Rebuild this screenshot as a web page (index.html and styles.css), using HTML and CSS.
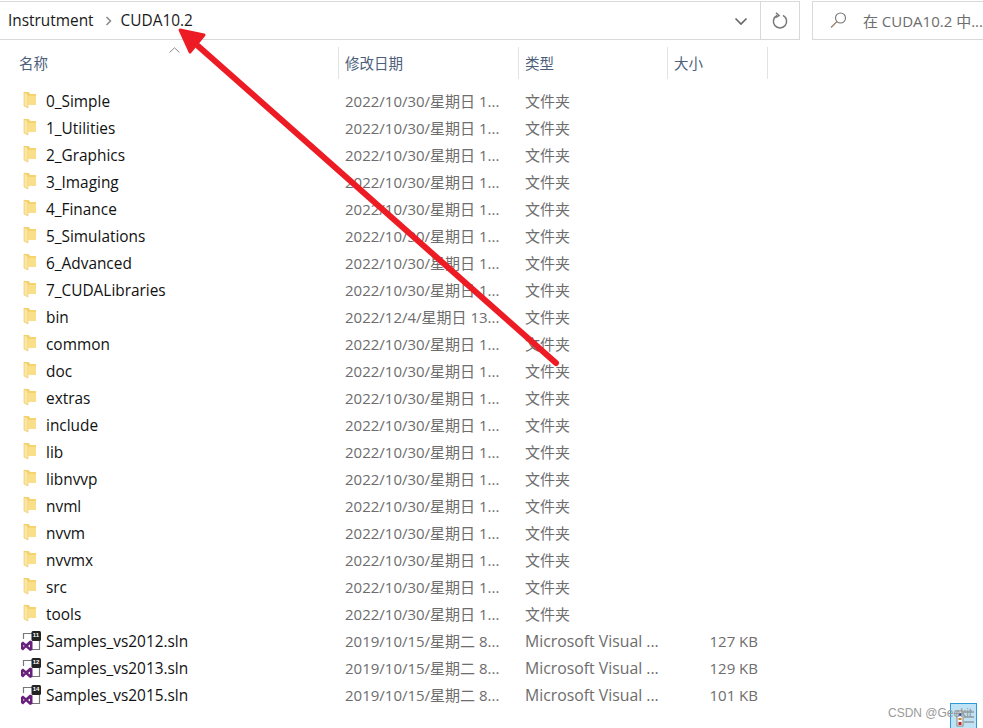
FILE: index.html
```html
<!DOCTYPE HTML>
<html>

<head>
	<meta http-equiv="Content-Type" content="text/html; charset=utf-8">
	<title>CUDA10.2</title>
	<link rel="stylesheet" href="styles.css">
</head>

<body>
	<svg width="0" height="0" class="defs">
		<symbol id="folder" viewBox="0 0 16 18">
			<path d="M3 1 L8 1 L9 3 L15 3 L15 14 L3 14 Z" fill="#f6d36c" />
			<path d="M3 1 L7 3 L7 17 L3 15 Z" fill="#fbe6a2" stroke="#e6c260" stroke-width=".6" />
			<path d="M7 5 L15 5 L15 14 L7 14 Z" fill="#fadf8a" />
		</symbol>
		<symbol id="sln" viewBox="0 0 20 20">
			<path d="M2.5 8 V2.5 H12 M18.5 10 V18.5 H11" fill="none" stroke="#777" stroke-width="1.2" />
			<rect x="10.5" y="0" width="9.5" height="10" rx="1.5" fill="#222" />
			<path d="M0 12 L2 10.5 L5 13 L9 9.5 L11.5 10.5 V19 L9 20 L5 16.5 L2 19.5 L0 18 Z M2.4 13.8 V16 L3.6 15 Z M7 15 L9 16.4 V13.4 Z" fill="#68217a" fill-rule="evenodd" />
		</symbol>
	</svg>

	<div class="toolbar">
		<div class="address">
			<div class="crumbs">
				<span>Instrutment</span>
				<svg class="chev" width="7" height="10" viewBox="0 0 7 10"><path d="M1.5 1 L5.5 5 L1.5 9" fill="none" stroke="#8a8a8a" stroke-width="1.5" /></svg>
				<span>CUDA10.2</span>
			</div>
			<div class="drop">
				<svg width="14" height="9" viewBox="0 0 14 9"><path d="M1.5 1.5 L7 7 L12.5 1.5" fill="none" stroke="#666" stroke-width="1.6" /></svg>
			</div>
			<div class="refresh">
				<svg width="16" height="17" viewBox="0 0 16 17"><path d="M5 3.4 A6.6 6.6 0 1 0 11 3.4" fill="none" stroke="#777" stroke-width="1.5" /><path d="M4 .8 L7 3.6 L3.4 5.6" fill="none" stroke="#777" stroke-width="1.5" /></svg>
			</div>
		</div>
		<div class="search">
			<svg width="17" height="17" viewBox="0 0 17 17"><circle cx="10.5" cy="6" r="5" fill="none" stroke="#777" stroke-width="1.1" /><path d="M7 9.5 L1 15.5" stroke="#9a7f66" stroke-width="1.3" /></svg>
			<span>在 CUDA10.2 中...</span>
		</div>
	</div>

	<div class="head">
		<div class="th th-name">名称<svg class="sort" width="11" height="6" viewBox="0 0 11 6"><path d="M.5 5.5 L5.5 .8 L10.5 5.5" fill="none" stroke="#8a8a8a" /></svg></div>
		<div class="th">修改日期</div>
		<div class="th">类型</div>
		<div class="th">大小</div>
	</div>

	<div class="list">
		<div class="row"><div class="name"><svg class="ico"><use href="#folder" /></svg>0_Simple</div><div class="cell">2022/10/30/星期日 1...</div><div class="cell">文件夹</div><div class="size"></div></div>
		<div class="row"><div class="name"><svg class="ico"><use href="#folder" /></svg>1_Utilities</div><div class="cell">2022/10/30/星期日 1...</div><div class="cell">文件夹</div><div class="size"></div></div>
		<div class="row"><div class="name"><svg class="ico"><use href="#folder" /></svg>2_Graphics</div><div class="cell">2022/10/30/星期日 1...</div><div class="cell">文件夹</div><div class="size"></div></div>
		<div class="row"><div class="name"><svg class="ico"><use href="#folder" /></svg>3_Imaging</div><div class="cell">2022/10/30/星期日 1...</div><div class="cell">文件夹</div><div class="size"></div></div>
		<div class="row"><div class="name"><svg class="ico"><use href="#folder" /></svg>4_Finance</div><div class="cell">2022/10/30/星期日 1...</div><div class="cell">文件夹</div><div class="size"></div></div>
		<div class="row"><div class="name"><svg class="ico"><use href="#folder" /></svg>5_Simulations</div><div class="cell">2022/10/30/星期日 1...</div><div class="cell">文件夹</div><div class="size"></div></div>
		<div class="row"><div class="name"><svg class="ico"><use href="#folder" /></svg>6_Advanced</div><div class="cell">2022/10/30/星期日 1...</div><div class="cell">文件夹</div><div class="size"></div></div>
		<div class="row"><div class="name"><svg class="ico"><use href="#folder" /></svg>7_CUDALibraries</div><div class="cell">2022/10/30/星期日 1...</div><div class="cell">文件夹</div><div class="size"></div></div>
		<div class="row"><div class="name"><svg class="ico"><use href="#folder" /></svg>bin</div><div class="cell">2022/12/4/星期日 13...</div><div class="cell">文件夹</div><div class="size"></div></div>
		<div class="row"><div class="name"><svg class="ico"><use href="#folder" /></svg>common</div><div class="cell">2022/10/30/星期日 1...</div><div class="cell">文件夹</div><div class="size"></div></div>
		<div class="row"><div class="name"><svg class="ico"><use href="#folder" /></svg>doc</div><div class="cell">2022/10/30/星期日 1...</div><div class="cell">文件夹</div><div class="size"></div></div>
		<div class="row"><div class="name"><svg class="ico"><use href="#folder" /></svg>extras</div><div class="cell">2022/10/30/星期日 1...</div><div class="cell">文件夹</div><div class="size"></div></div>
		<div class="row"><div class="name"><svg class="ico"><use href="#folder" /></svg>include</div><div class="cell">2022/10/30/星期日 1...</div><div class="cell">文件夹</div><div class="size"></div></div>
		<div class="row"><div class="name"><svg class="ico"><use href="#folder" /></svg>lib</div><div class="cell">2022/10/30/星期日 1...</div><div class="cell">文件夹</div><div class="size"></div></div>
		<div class="row"><div class="name"><svg class="ico"><use href="#folder" /></svg>libnvvp</div><div class="cell">2022/10/30/星期日 1...</div><div class="cell">文件夹</div><div class="size"></div></div>
		<div class="row"><div class="name"><svg class="ico"><use href="#folder" /></svg>nvml</div><div class="cell">2022/10/30/星期日 1...</div><div class="cell">文件夹</div><div class="size"></div></div>
		<div class="row"><div class="name"><svg class="ico"><use href="#folder" /></svg>nvvm</div><div class="cell">2022/10/30/星期日 1...</div><div class="cell">文件夹</div><div class="size"></div></div>
		<div class="row"><div class="name"><svg class="ico"><use href="#folder" /></svg>nvvmx</div><div class="cell">2022/10/30/星期日 1...</div><div class="cell">文件夹</div><div class="size"></div></div>
		<div class="row"><div class="name"><svg class="ico"><use href="#folder" /></svg>src</div><div class="cell">2022/10/30/星期日 1...</div><div class="cell">文件夹</div><div class="size"></div></div>
		<div class="row"><div class="name"><svg class="ico"><use href="#folder" /></svg>tools</div><div class="cell">2022/10/30/星期日 1...</div><div class="cell">文件夹</div><div class="size"></div></div>
		<div class="row"><div class="name"><span class="sln-ico"><svg class="ico2"><use href="#sln" /></svg><b>11</b></span>Samples_vs2012.sln</div><div class="cell">2019/10/15/星期二 8...</div><div class="cell app">Microsoft Visual ...</div><div class="size">127 KB</div></div>
		<div class="row"><div class="name"><span class="sln-ico"><svg class="ico2"><use href="#sln" /></svg><b>12</b></span>Samples_vs2013.sln</div><div class="cell">2019/10/15/星期二 8...</div><div class="cell app">Microsoft Visual ...</div><div class="size">129 KB</div></div>
		<div class="row"><div class="name"><span class="sln-ico"><svg class="ico2"><use href="#sln" /></svg><b>14</b></span>Samples_vs2015.sln</div><div class="cell">2019/10/15/星期二 8...</div><div class="cell app">Microsoft Visual ...</div><div class="size">101 KB</div></div>
	</div>

	<!-- annotation drawn on top of the screenshot -->
	<svg class="arrow" width="983" height="400" viewBox="0 0 983 400">
		<path d="M556 363 L198 46" stroke="#ed1c24" stroke-width="6" stroke-linecap="round" fill="none" />
		<path d="M180 30 L204 35 L190 52 Z" fill="#ed1c24" stroke="#ed1c24" stroke-width="3" stroke-linejoin="round" />
	</svg>

	<div class="corner">
		<svg width="32" height="23" viewBox="0 0 32 23">
			<rect x="8" y="7" width="6" height="15" fill="#f4f4f4" stroke="#888" />
			<rect x="9.5" y="9" width="3" height="3" fill="#2a5bb0" />
			<rect x="9.5" y="14" width="3" height="2" fill="#c9852a" />
			<rect x="9.5" y="18" width="3" height="3" fill="#c0271f" />
			<path d="M15 8 H25 M15 13 H25 M15 18 H25" stroke="#777" />
		</svg>
	</div>
	<div class="mark">CSDN @Geekit</div>
</body>

</html>
```

FILE: styles.css
```css
* {
	box-sizing: border-box;
}

html,
body {
	margin: 0;
	padding: 0;
	background: #fff;
	overflow: hidden;
}

body {
	width: 983px;
	height: 728px;
	position: relative;
	font-family: "Open Sans", "Noto Sans CJK SC", sans-serif;
	font-size: 15px;
	color: #1a1a1a;
}

.defs {
	position: absolute;
}

.toolbar {
	display: flex;
	height: 40px;
	padding-top: 1px;
}

.address {
	width: 801px;
	display: flex;
	border-top: 1px solid #d9d9d9;
	border-bottom: 1px solid #d9d9d9;
	border-right: 1px solid #d9d9d9;
}

.crumbs {
	flex: 1;
	display: flex;
	align-items: center;
	padding-left: 8px;
	font-size: 15.4px;
}

.chev {
	margin: 0 9px 0 11px;
}

.drop {
	width: 46px;
	display: flex;
	align-items: center;
	justify-content: center;
	padding-left: 8px;
	padding-top: 2px;
	border-right: 1px solid #d9d9d9;
}

.refresh {
	width: 38px;
	display: flex;
	align-items: center;
	justify-content: center;
}

.search {
	margin-left: 12px;
	flex: 1;
	display: flex;
	align-items: center;
	gap: 16px;
	padding-left: 17px;
	border: 1px solid #d9d9d9;
	border-right: 0;
	color: #6d6d6d;
	white-space: nowrap;
}

.head {
	display: grid;
	grid-template-columns: 339px 180px 149px 100px;
	height: 32px;
	margin-top: 7px;
}

.th {
	position: relative;
	display: flex;
	align-items: center;
	padding-left: 6px;
	padding-bottom: 2px;
	border-right: 1px solid #e3e3e3;
	color: #4c607a;
	font-size: 14.5px;
}

.th-name {
	padding-left: 19px;
}

.sort {
	position: absolute;
	left: 169px;
	top: 0;
}

.list {
	margin-top: 8px;
}

.row {
	display: grid;
	grid-template-columns: 338px 180px 149px 91px;
	height: 27px;
	align-items: center;
	white-space: nowrap;
}

.name {
	display: flex;
	align-items: center;
	padding-left: 21px;
	padding-top: 2px;
	color: #111;
	font-size: 15.4px;
}

.ico {
	width: 16px;
	height: 18px;
	margin-right: 9px;
	margin-top: -4px;
}

.sln-ico {
	position: relative;
	width: 20px;
	height: 20px;
	margin-right: 5px;
	margin-top: -2px;
}

.ico2 {
	width: 20px;
	height: 20px;
	display: block;
}

.sln-ico b {
	position: absolute;
	left: 10px;
	top: 1px;
	width: 10px;
	text-align: center;
	font-family: "Liberation Sans", sans-serif;
	font-size: 6px;
	line-height: 7px;
	color: #fff;
}

.cell {
	padding-left: 7px;
	color: #6d6d6d;
}

.app {
	font-size: 15.8px;
}

.size {
	text-align: right;
	color: #6d6d6d;
}

.arrow {
	position: absolute;
	left: 0;
	top: 0;
}

.corner {
	position: absolute;
	left: 950px;
	top: 703px;
	width: 27px;
	height: 25px;
	background: #bfe3f5;
	border: 1px solid #2b9bd6;
	border-bottom: 0;
	overflow: hidden;
}

.corner svg {
	display: block;
	margin-left: -2px;
}

.mark {
	position: absolute;
	left: 888px;
	top: 706px;
	font-family: "Liberation Sans", sans-serif;
	font-size: 12px;
	color: #9a9a9a;
}
```
